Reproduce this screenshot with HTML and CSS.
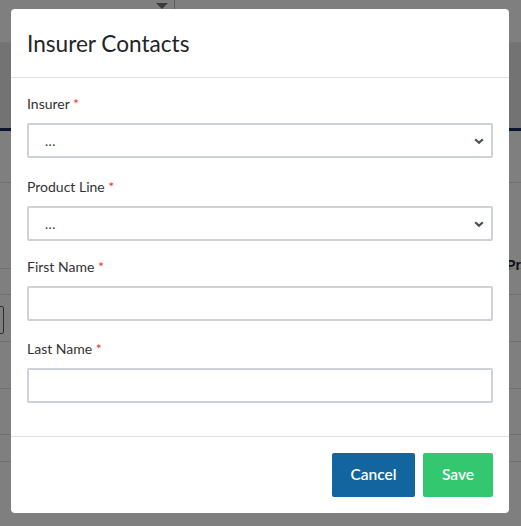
FILE: index.html
```html
<!DOCTYPE html>
<html>
<head>
<meta charset="utf-8">
<link rel="stylesheet" href="styles.css">
</head>
<body>
<div class="page">
  <div class="topbar">
    <div class="tb-left"><span class="caret"></span></div>
    <div class="tb-right"></div>
  </div>
  <div class="hero"></div>
  <div class="navy"></div>
  <div class="rows">
    <div class="row r1"></div>
    <div class="row r2"></div>
    <div class="row r3"><span class="pr">Pr</span></div>
    <div class="row r4"><span class="lbox"></span></div>
    <div class="row r5"></div>
    <div class="row r6"></div>
    <div class="row r7"></div>
  </div>
</div>
<div class="overlay">
  <div class="modal">
    <div class="modal-header"><h1 class="title">Insurer Contacts</h1></div>
    <div class="modal-body">
      <div class="field">
        <label class="label">Insurer <span class="req">*</span></label>
        <div class="control select"><span class="val">...</span>
          <svg class="chev" width="10" height="8" viewBox="0 0 10 8"><path d="M1.2 2.2 L5 5.8 L8.8 2.2" fill="none" stroke="#495057" stroke-width="2.2"/></svg>
        </div>
      </div>
      <div class="field">
        <label class="label">Product Line <span class="req">*</span></label>
        <div class="control select"><span class="val">...</span>
          <svg class="chev" width="10" height="8" viewBox="0 0 10 8"><path d="M1.2 2.2 L5 5.8 L8.8 2.2" fill="none" stroke="#495057" stroke-width="2.2"/></svg>
        </div>
      </div>
      <div class="field field-text">
        <label class="label">First Name <span class="req">*</span></label>
        <div class="control"></div>
      </div>
      <div class="field field-text2">
        <label class="label">Last Name <span class="req">*</span></label>
        <div class="control"></div>
      </div>
    </div>
    <div class="modal-footer">
      <button class="btn cancel">Cancel</button>
      <button class="btn save">Save</button>
    </div>
  </div>
</div>
</body>
</html>
```

FILE: styles.css
```css
* { box-sizing: border-box; }
html, body { margin: 0; padding: 0; }
body {
  width: 521px;
  height: 526px;
  overflow: hidden;
  position: relative;
  background: #7f7f7f;
  font-family: Lato, "Open Sans", sans-serif;
}
.page { width: 521px; height: 526px; }
.topbar { height: 43px; display: flex; background: #7f7f7f; border-bottom: 1px solid #767676; }
.tb-left { width: 175px; border-right: 1px solid #5e5e5e; position: relative; }
.caret {
  position: absolute; left: 156px; top: 3px;
  width: 0; height: 0;
  border-left: 6px solid transparent; border-right: 6px solid transparent;
  border-top: 6px solid #3a3a3a;
}
.hero { height: 85px; background: #737373; }
.navy { height: 3px; background: #0a1630; }
.rows { display: flex; flex-direction: column; }
.row { border-bottom: 1px solid #6f6f6f; position: relative; }
.r1 { height: 52px; }
.r2 { height: 86px; }
.r3 { height: 26px; }
.r4 { height: 47px; }
.r5 { height: 47px; }
.r6 { height: 46px; }
.r7 { height: 27px; }
.pr { position: absolute; right: 0; top: -12px; font: bold 14px "Liberation Sans", sans-serif; color: #111; }
.lbox { position: absolute; left: -4px; top: 11px; width: 8px; height: 28px; border: 1px solid #2e2e2e; border-radius: 2px; }

.overlay { position: absolute; inset: 0; padding: 9px 12px 13px 11px; }
.modal {
  width: 498px; height: 504px;
  background: #fff; border-radius: 4px;
  display: flex; flex-direction: column;
}
.modal-header {
  height: 69px; border-bottom: 1px solid #dee2e6;
  padding: 0 16px; display: flex; align-items: center;
}
.title { margin: 0; font-size: 22.6px; font-weight: 400; color: #212529; }
.modal-body { padding: 16px 16px 0; display: flex; flex-direction: column; gap: 19px; height: 359px; border-bottom: 1px solid #dee2e6; }
.field { display: flex; flex-direction: column; gap: 9px; }
.field-text { margin-top: -3px; }
.field-text2 { margin-top: -1px; }
.label { font-size: 14px; line-height: 20px; color: #333; height: 20px; }
.req { color: #e3342f; }
.control {
  height: 35px; border: 2px solid #cdd2d9; border-radius: 2px;
  display: flex; align-items: center; justify-content: space-between;
  padding: 0 7px 0 16px;
}
.val { font-size: 13px; color: #333; letter-spacing: 0.5px; }
.chev { display: block; }
.modal-footer { flex: 1; display: flex; justify-content: flex-end; align-items: flex-start; padding: 16px 16px 0; gap: 8px; }
.btn {
  height: 44px; border: 0; border-radius: 2px; color: #fff;
  font-family: inherit; font-size: 15.5px; font-weight: 600; padding: 0 0 3px;
}
.cancel { width: 83px; background: #12659e; }
.save { width: 70px; background: #33c870; }
```
